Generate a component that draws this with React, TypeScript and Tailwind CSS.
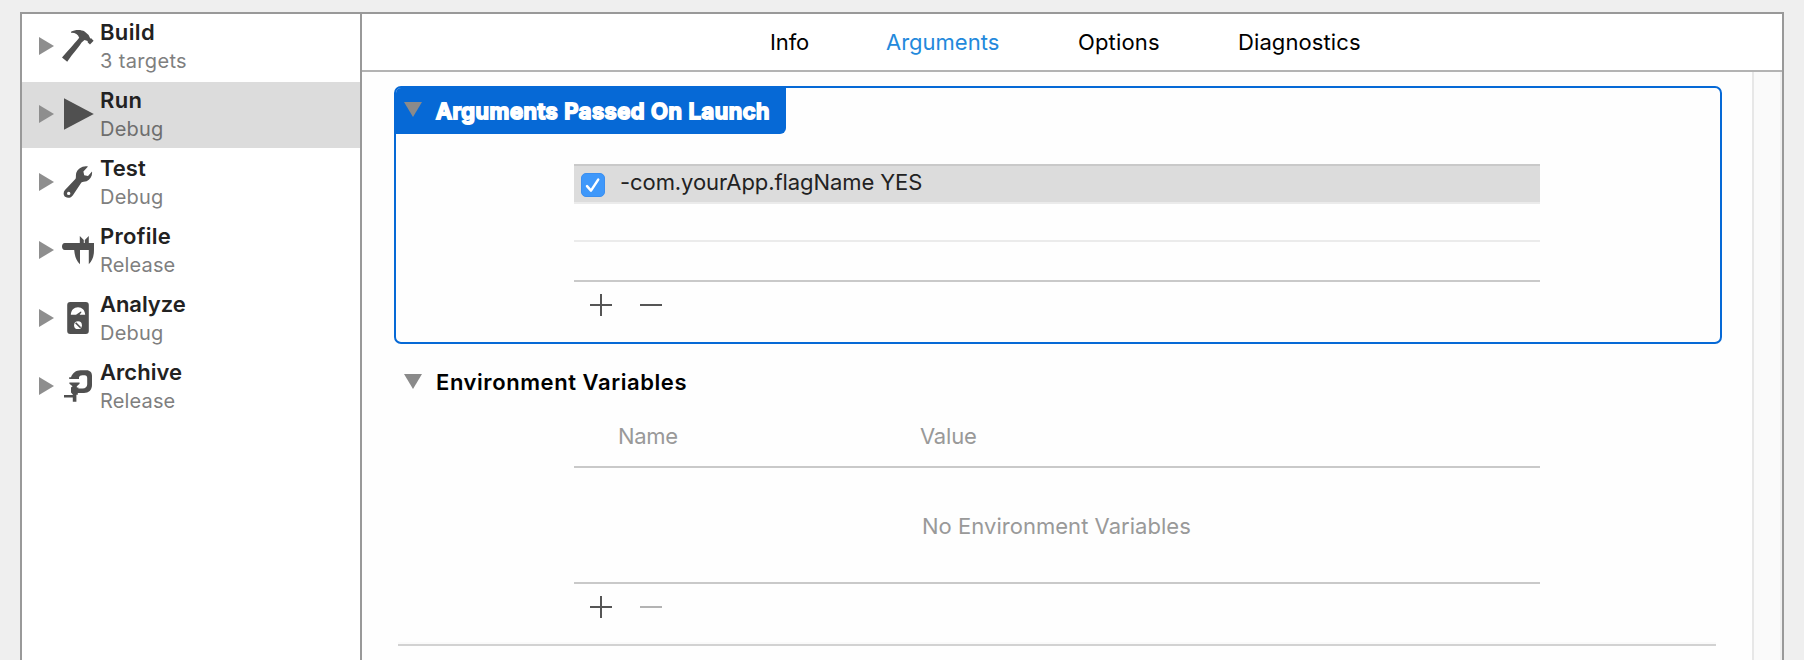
import type { ReactNode } from "react";

const HammerIcon = () => (
  <path d="M9 1.8C13-.4 19-.6 22.6 1.6L26.6 5L28.3 8.6L29.2 8.3L31.6 10.8L28 14.6L25.8 12.6L25.6 10.9L22.5 9.9L19.6 12.4C17.5 16 13 21 9.6 25.5L5.2 31.8L0 27.6L5 21.8C8.5 18.6 11.5 14 15 10.6L17.2 7.8C16 4 13 2.6 9 2.8Z" />
);

const PlayIcon = () => <path d="M2 .2L31.8 16L2 31.8Z" />;

const WrenchIcon = () => (
  <path
    fillRule="evenodd"
    d="M26 .4L21.4 5.4L22.2 9.2L26 10L30 5.6C30.6 9.6 28.4 13.4 24.6 15.2C22.6 15.6 20.6 15.6 19.4 16.4L10.9 29.2C9.4 31.6 6 32.6 3.6 31C1.2 29.4 1 26.2 3 24L13.6 12.8C14.2 11.4 13.6 9.4 14.2 7C15.8 2.6 20.4-.6 26 .4ZM6.7 25.7A1.7 1.7 0 1 0 6.7 29.1A1.7 1.7 0 1 0 6.7 25.7Z"
  />
);

const CaliperIcon = () => (
  <path d="M2.8 9H17.8V2L21.8 6V9H22.8V6L26.8 2V9H32V16C32 22 30.5 26.5 26.8 30.2V16H18V30.2C14 26.5 12.8 22 12.2 16H2.8C1 16 0 14.4 0 12.5C0 10.6 1 9 2.8 9Z" />
);

const MeterIcon = () => (
  <>
    <rect x="5.2" y="0" width="21.6" height="32" rx="3" />
    <path className="fill-white" d="M8.8 12.8C9 8 12 5.2 16 5.2S23 8 23.2 12.8H17.6L19.6 10L18.8 9.4L14 12.8Z" />
    <circle className="fill-white" cx="16" cy="23.2" r="3.9" />
    <path className="stroke-[#505050]" strokeWidth="1.6" d="M13.6 20.8L18.6 25.8" />
  </>
);

const ClampIcon = () => (
  <path d="M7.2 9V7.2H9C10.4 3 14 .2 18.5 .2H24.5C28 .2 30 2.4 30 5.8V15C30 20 26.6 23 22 23H15.8V24.8H14.4V31.8H10.8V27.4H2V25H10.8V24.4L9 22.6V17.4L10.6 16.2L7.4 13.8V12.4H17.6V13.8L14.8 16.2V17.4H16.4V18.4H20.6C23.4 18.4 25.2 16.8 25.2 14.2V8C25.2 6.4 24.4 5.2 22.6 5.2H20.4C18.6 5.2 17.4 6 17 7.2V9Z" />
);

const schemes: { title: string; detail: string; icon: ReactNode; titleClass: string; detailClass: string; selected?: boolean }[] = [
  { title: "Build", detail: "3 targets", icon: <HammerIcon />, titleClass: "tracking-[0.35px]", detailClass: "tracking-[0.35px]" },
  { title: "Run", detail: "Debug", icon: <PlayIcon />, titleClass: "tracking-[0.4px]", detailClass: "tracking-[0.2px]", selected: true },
  { title: "Test", detail: "Debug", icon: <WrenchIcon />, titleClass: "tracking-[0px]", detailClass: "tracking-[0.2px]" },
  { title: "Profile", detail: "Release", icon: <CaliperIcon />, titleClass: "tracking-[0.3px]", detailClass: "tracking-[0.15px]" },
  { title: "Analyze", detail: "Debug", icon: <MeterIcon />, titleClass: "tracking-[-0.05px]", detailClass: "tracking-[0.2px]" },
  { title: "Archive", detail: "Release", icon: <ClampIcon />, titleClass: "tracking-[0.05px]", detailClass: "tracking-[0.15px]" },
];

function SchemeRow({ title, detail, icon, titleClass, detailClass, selected }: (typeof schemes)[number]) {
  return (
    <li className="h-[68px]">
      <div className={`flex h-[66px] pl-[17px] ${selected ? "bg-[#dcdcdc]" : ""}`}>
        <svg className="mt-[23px] h-[18px] w-[15px] fill-[#8e8e8e]" viewBox="0 0 15 18">
          <path d="M0 0L15 9L0 18Z" />
        </svg>
        <svg className="mt-4 ml-2 h-8 w-8 fill-[#505050]" viewBox="0 0 32 32">
          {icon}
        </svg>
        <div className="ml-[6px] flex flex-col gap-1 pt-[5px]">
          <span className={`text-[22px] leading-[26px] font-semibold text-[#222] ${titleClass}`}>{title}</span>
          <span className={`text-[20px] leading-6 ${selected ? "text-[#6e6e6e]" : "text-[#7f7f7f]"} ${detailClass}`}>{detail}</span>
        </div>
      </div>
    </li>
  );
}

const Disclosure = ({ className }: { className: string }) => (
  <svg className={`h-[15px] w-[18px] shrink-0 fill-[#8a8a8a] ${className}`} viewBox="0 0 18 15">
    <path d="M0 0H18L9 15Z" />
  </svg>
);

const AddRemove = ({ removeClass }: { removeClass: string }) => (
  <div className="mt-3 flex gap-7 pl-4">
    <svg className="h-[22px] w-[22px] fill-[#555]" viewBox="0 0 22 22">
      <path d="M10 0H12V10H22V12H12V22H10V12H0V10H10Z" />
    </svg>
    <svg className={`h-[22px] w-[22px] ${removeClass}`} viewBox="0 0 22 22">
      <path d="M0 10H22V12H0Z" />
    </svg>
  </div>
);

export default function App() {
  return (
    <div className="h-[660px] w-[1804px] overflow-hidden bg-[#efefef] pt-3 pl-5 font-[Inter,sans-serif] whitespace-nowrap">
      <div className="flex h-[648px] w-[1764px] border-2 border-b-0 border-[#999] bg-white">
        <ul className="w-[340px] shrink-0 border-r-2 border-[#999]">
          {schemes.map((s) => (
            <SchemeRow key={s.title} {...s} />
          ))}
        </ul>

        <div className="flex w-[1420px] flex-col">
          <nav className="flex h-[58px] shrink-0 items-center border-b-2 border-[#b3b3b3] pl-[408px] text-[22px] leading-[26px] text-black">
            <span className="w-[116px] tracking-[-0.1px]">Info</span>
            <span className="w-[192px] text-[#2389dc]">Arguments</span>
            <span className="w-[160px] tracking-[0.15px]">Options</span>
            <span className="tracking-[0.1px]">Diagnostics</span>
          </nav>

          <div className="flex min-h-0 flex-1">
            <main className="w-[1390px] bg-[#fefefe]">
              <section className="mt-[14px] ml-8 h-[258px] w-[1328px] overflow-hidden rounded-[7px] border-2 border-[#0669d6]">
                <h2 className="flex h-[46px] w-[390px] rounded-br-md bg-[#0669d6] pt-[10px] pl-2 text-[22px] leading-[26px] font-semibold tracking-[0.53px] text-white">
                  <Disclosure className="mt-1" />
                  <span className="ml-[14px] [-webkit-text-stroke:1.9px_white]">Arguments Passed On Launch</span>
                </h2>
                <div className="mt-[30px] ml-[178px] w-[966px]">
                  <div className="flex h-10 border-t-2 border-b-2 border-t-[#c9c9c9] border-b-[#ebebeb] bg-[#dcdcdc] pl-[7px]">
                    <span className="mt-[7px] flex h-6 w-6 items-center justify-center rounded-[5px] border border-[#3b8ff0] bg-[#3f98fa]">
                      <svg className="h-[22px] w-[22px] fill-none stroke-white" viewBox="0 0 22 22">
                        <path d="M5 12.2L9 16.6L16.2 5.6" strokeWidth="2.5" strokeLinecap="round" strokeLinejoin="round" />
                      </svg>
                    </span>
                    <span className="ml-[15px] pt-[3px] text-[22px] leading-[26px] tracking-[-0.08px] text-[#222]">-com.yourApp.flagName YES</span>
                  </div>
                  <div className="h-[38px] border-b-2 border-[#ebebeb]" />
                  <div className="h-10 border-b-2 border-[#c9c9c9]" />
                  <AddRemove removeClass="fill-[#555]" />
                </div>
              </section>

              <section className="mt-[25px]">
                <h2 className="flex pl-[42px] text-[22px] leading-[26px] font-semibold tracking-[0.57px] text-black">
                  <Disclosure className="mt-[5px]" />
                  <span className="ml-[14px]">Environment Variables</span>
                </h2>
                <div className="mt-7 ml-[212px] w-[966px] text-[22px] leading-[26px] text-[#999]">
                  <div className="flex h-[45px] border-b-2 border-[#c9c9c9] pl-11">
                    <span className="w-[302px] tracking-[-0.3px]">Name</span>
                    <span className="tracking-[-0.2px]">Value</span>
                  </div>
                  <div className="h-[116px] border-b-2 border-[#c9c9c9] pt-[45px] pl-[348px] tracking-[0.03px]">No Environment Variables</div>
                  <AddRemove removeClass="fill-[#b3b3b3]" />
                </div>
              </section>
              <div className="mt-6 ml-9 h-1 w-[1318px] border-b-2 border-[#d2d2d2] bg-[#fafafa]" />
            </main>
            <div className="w-[30px] border-r-2 border-l-2 border-r-[#f0f0f0] border-l-[#e7e7e7] bg-[#fafafa]" />
          </div>
        </div>
      </div>
    </div>
  );
}
